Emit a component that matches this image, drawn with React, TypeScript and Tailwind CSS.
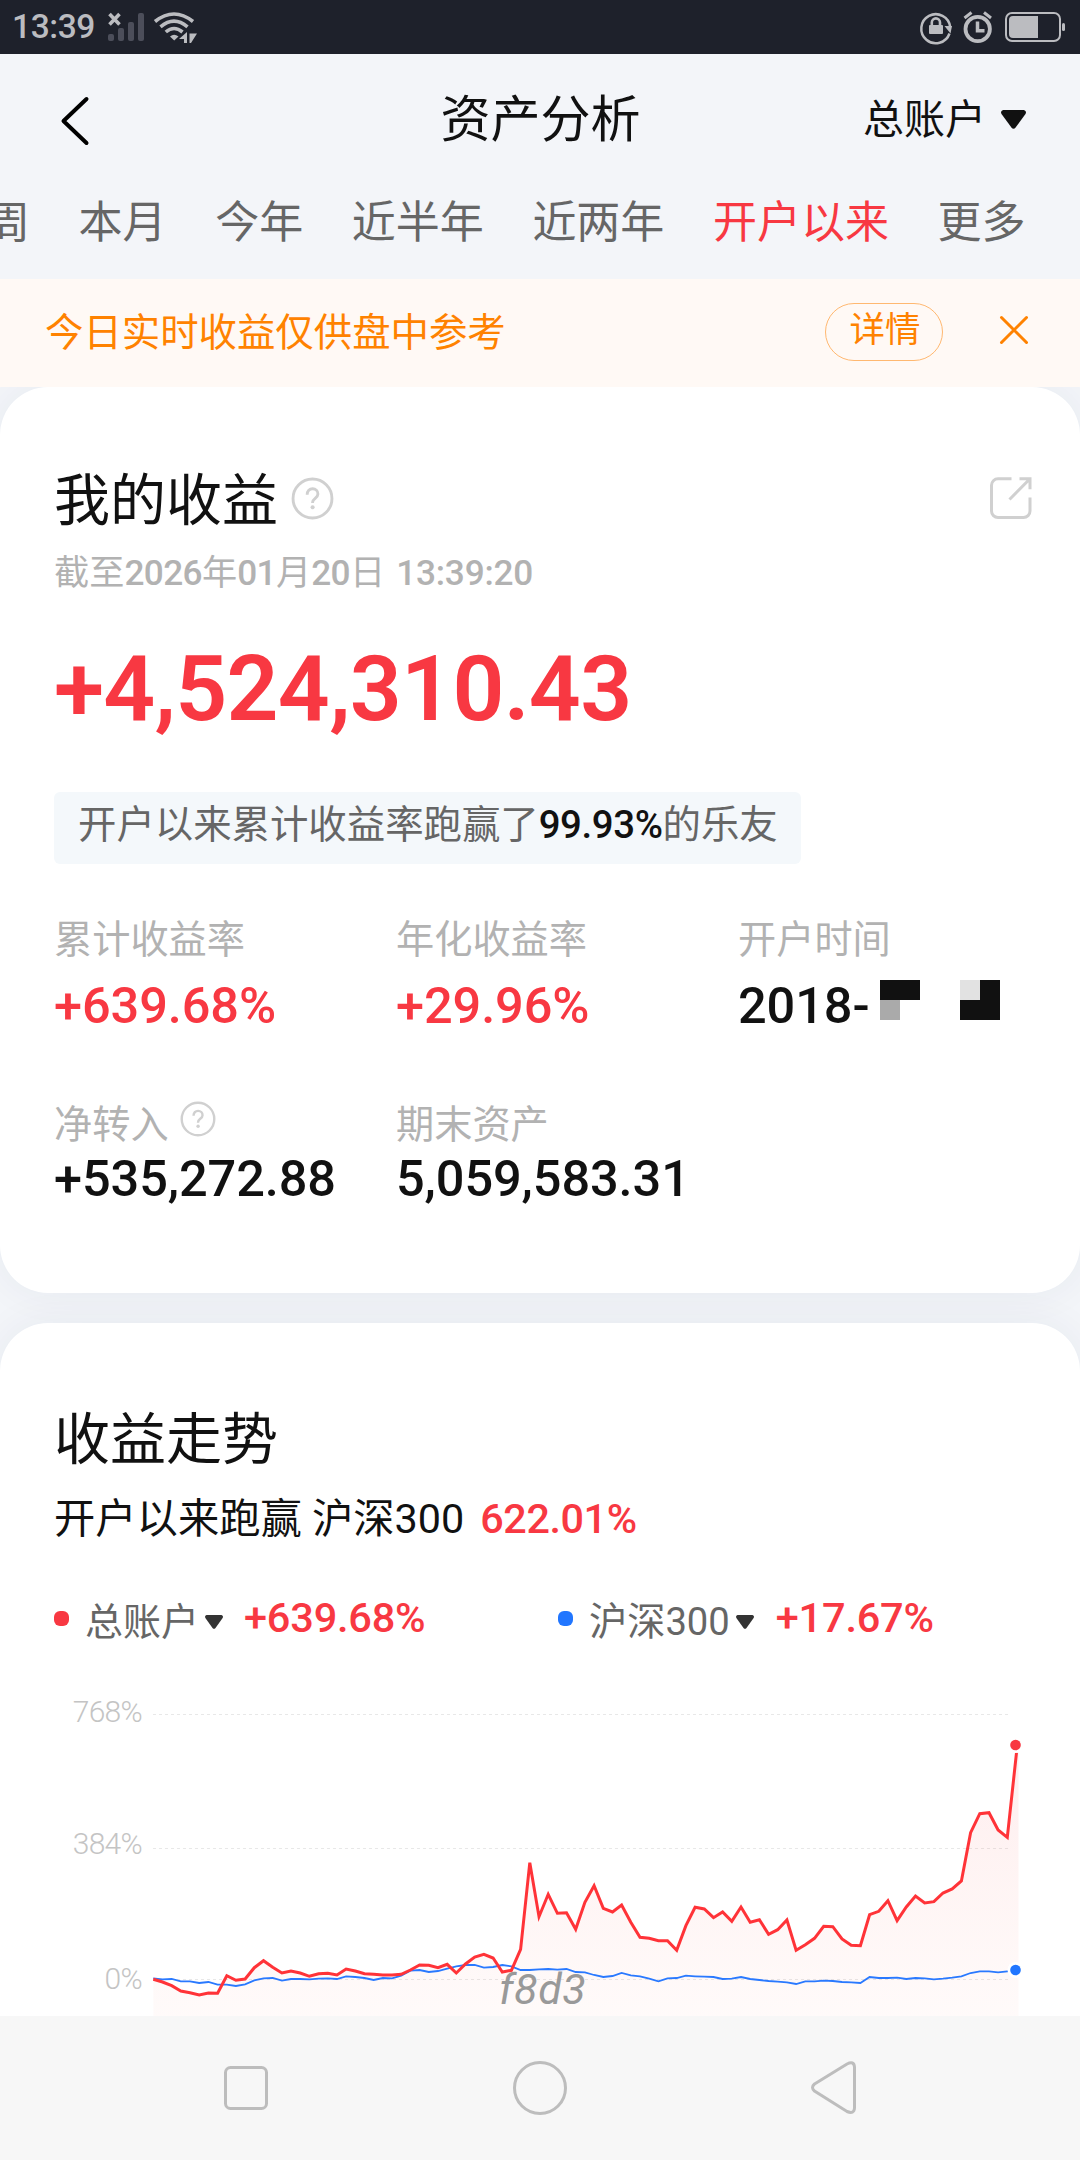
import type { ReactNode } from "react";

const TABS = ["本周", "本月", "今年", "近半年", "近两年", "开户以来", "更多"];
const ACTIVE_TAB = "开户以来";

// chart geometry: the series are stored as thirds of a pixel below CHART_TOP
const CHART_LEFT = 153.3;
const CHART_TOP = 1660;
const STEP = 9.183;

const ACCOUNT_SERIES = [
  958, 966, 977, 993, 998, 1005, 999, 1000, 947, 961, 957, 923, 902, 922, 939,
  933, 939, 949, 941, 940, 945, 927, 933, 941, 943, 945, 945, 943, 930, 915,
  916, 923, 913, 939, 912, 891, 883, 894, 936, 931, 868, 608, 770, 703, 760,
  758, 808, 727, 677, 745, 756, 735, 787, 832, 835, 842, 842, 871, 797, 742,
  747, 773, 756, 784, 741, 787, 779, 823, 809, 780, 871, 854, 835, 799, 800,
  837, 856, 857, 764, 754, 722, 782, 741, 708, 729, 725, 699, 687, 663, 518,
  461, 458, 510, 532, 278,
];

const INDEX_SERIES = [
  955, 958, 957, 964, 964, 969, 966, 974, 974, 978, 973, 961, 955, 954, 962,
  957, 957, 958, 956, 955, 957, 949, 951, 954, 960, 954, 955, 947, 932, 930,
  936, 933, 926, 919, 915, 915, 923, 921, 915, 919, 930, 930, 928, 927, 929,
  927, 936, 937, 945, 951, 948, 939, 946, 949, 956, 964, 955, 954, 947, 949,
  950, 951, 957, 956, 951, 957, 960, 963, 965, 967, 972, 964, 964, 962, 963,
  966, 967, 969, 951, 954, 954, 953, 957, 954, 955, 958, 956, 953, 949, 939,
  934, 934, 937, 934, 932,
];

const GRID = [
  { label: "768%", y: 1714.5, textY: 1722 },
  { label: "384%", y: 1848.5, textY: 1854 },
  { label: "0%", y: 1979.5, textY: 1989 },
];

function toPoints(series: number[]) {
  return series
    .map((v, i) => `${(CHART_LEFT + i * STEP).toFixed(1)},${(CHART_TOP + v / 3).toFixed(1)}`)
    .join(" ");
}

function StatusBar() {
  return (
    <div className="flex h-[54px] items-center justify-between bg-[#1e212b] pr-[14px] pl-[12px]">
      <div className="flex h-full items-center">
        <span className="w-[88px] text-[33.5px] leading-[58px] font-medium tracking-[-0.4px] text-[#bbbcc0]">
          13:39
        </span>
        <svg width="100" height="54" viewBox="100 0 100 54" fill="none">
          <path d="M109.5 14l10 10.500M119.500 14l-10 10.500" stroke="#bbbcc0" strokeWidth="3.600" />
          <g fill="#4c4e5a">
            <rect x="108" y="34" width="6" height="7" rx="2" />
            <rect x="118" y="28" width="6" height="13" rx="2" />
            <rect x="128" y="22" width="6" height="19" rx="2" />
            <rect x="138" y="13" width="6" height="28" rx="2" />
          </g>
          <g stroke="#bbbcc0" strokeWidth="3.600">
            <path d="M155 21.500Q174 6.500 193 21.500" />
            <path d="M160.500 26.800Q174 15.500 187.500 26.800" />
            <path d="M165.800 32Q174 25 182.500 32" />
          </g>
          <path d="M170 36.500Q174 33 178.500 36.500L174.200 40.500Z" fill="#bbbcc0" />
          <path d="M187 32v11h-3v-4h-5zM189.500 32v1.500h7.500l-6 9.500h-1.500z" fill="#bbbcc0" />
        </svg>
      </div>
      <svg width="148" height="54" viewBox="918 0 148 54" fill="none">
        <path
          d="M949.500 33.500A14.500 14.500 0 1 1 950.200 27"
          stroke="#bbbcc0"
          strokeWidth="2.500"
        />
        <path d="M944.500 26h7.500l-1.500 7.500z" fill="#bbbcc0" />
        <rect x="929" y="25" width="14" height="9" rx="1" fill="#bbbcc0" />
        <path d="M931.800 26v-3.500a4.100 4.100 0 0 1 8.200 0V26" stroke="#bbbcc0" strokeWidth="2.600" />
        <circle cx="977.700" cy="29" r="12.200" stroke="#bbbcc0" strokeWidth="3.800" />
        <path d="M977.500 21.500v9.200h7" stroke="#bbbcc0" strokeWidth="3.500" />
        <path d="M964.500 18l7-5.500M991 18l-7-5.500" stroke="#bbbcc0" strokeWidth="3" />
        <rect x="1006" y="13" width="54" height="28" rx="6" stroke="#bbbcc0" strokeWidth="2" />
        <path d="M1013 16h25v22h-25a4 4 0 0 1-4-4V20a4 4 0 0 1 4-4z" fill="#bbbcc0" />
        <rect x="1062" y="23" width="3" height="8" rx="1.500" fill="#bbbcc0" />
      </svg>
    </div>
  );
}

function Caret({ className }: { className: string }) {
  return (
    <svg viewBox="0 0 24 19" className={className} preserveAspectRatio="none" fill="currentColor">
      <path d="M2 0h20q3 1 1.500 4L14 17.500q-2 2.500-4 0L.5 4Q-1 1 2 0z" />
    </svg>
  );
}

function HelpIcon({ className }: { className: string }) {
  return (
    <svg viewBox="0 0 42 42" className={className} fill="none" stroke="#d0d0d0">
      <circle cx="21" cy="21" r="19" strokeWidth="2.800" />
      <path
        d="M15.800 17.300c0-3.600 2.300-5.800 5.300-5.800s5.200 2.100 5.200 5c0 4.200-5.200 4.300-5.200 8.200v.8"
        strokeWidth="2.800"
      />
      <circle cx="21.100" cy="29.500" r="2" fill="#d0d0d0" stroke="none" />
    </svg>
  );
}

function Header() {
  return (
    <header className="h-[225px] overflow-hidden bg-[#f3f5f9]">
      <div className="grid h-[131px] grid-cols-3 items-center pr-[54px] pl-[60px]">
        <svg width="30" height="50" viewBox="0 0 30 50" fill="none" className="mt-0.5">
          <path d="M26.500 3L3.500 25l23 22" stroke="#000" strokeWidth="4" strokeLinecap="round" strokeLinejoin="round" />
        </svg>
        <h1 className="mr-[5px] text-center text-[50px] leading-[60px] text-[#111]">资产分析</h1>
        <div className="flex items-center justify-end text-[#111]">
          <span className="text-[41px] leading-[54px]">总账户</span>
          <Caret className="ml-[15px] h-[19px] w-[25px]" />
        </div>
      </div>
      <nav className="-ml-[58px] flex gap-[48.6px] pt-[8px] text-[44px] leading-[60px] whitespace-nowrap text-[#666]">
        {TABS.map((tab) => (
          <span key={tab} className={tab === ACTIVE_TAB ? "text-[#f83842]" : ""}>
            {tab}
          </span>
        ))}
      </nav>
    </header>
  );
}

function Notice() {
  return (
    <div className="relative flex h-[108px] items-center bg-[#fff9f5] pl-[45px] text-[#ff8200]">
      <span className="flex-1 text-[38.4px] leading-[50px]">今日实时收益仅供盘中参考</span>
      <button className="mb-0.5 h-[58px] w-[118px] rounded-full border border-[#ffb870] pb-1 pl-0.5 text-[35.500px] leading-[50px]">
        详情
      </button>
      <svg width="30" height="30" viewBox="0 0 30 30" className="mr-[51px] mb-1.5 ml-14">
        <path d="M2.500 2.500l25 25M27.500 2.500l-25 25" stroke="currentColor" strokeWidth="3" strokeLinecap="round" />
      </svg>
    </div>
  );
}

type StatProps = {
  label: string;
  help?: boolean;
  tone?: string;
  gap?: string;
  children: ReactNode;
};

function Stat({ label, help, tone = "text-[#111]", gap = "mt-4", children }: StatProps) {
  return (
    <div>
      <div className="flex h-10 items-center text-[38.2px] leading-10 text-[#b2b2b2]">
        {label}
        {help && <HelpIcon className="mb-3 ml-[11px] h-9 w-9" />}
      </div>
      <div
        className={`flex h-[60px] items-center text-[50.5px] leading-[60px] font-medium tracking-[-0.1px] ${gap} ${tone}`}
      >
        {children}
      </div>
    </div>
  );
}

function EarningsCard() {
  return (
    <section className="h-[906px] rounded-[48px] bg-white pt-[84px] pl-[54px] shadow-[0_0_40px_rgba(40,50,80,0.06)]">
      <div className="flex h-[60px] items-center">
        <h2 className="text-[56px] leading-[60px] text-[#111]">我的收益</h2>
        <HelpIcon className="mb-1.5 ml-[13px] h-[43px] w-[43px]" />
        <svg width="44" height="44" viewBox="0 0 44 44" fill="none" className="mr-[47px] mb-1.5 ml-auto">
          <path
            d="M22.500 2.800H9a6.500 6.500 0 0 0-6.500 6.500V35A6.500 6.500 0 0 0 9 41.500h25.500A6.500 6.500 0 0 0 41 35V21.500M30.500 2.800H41v10.500M40.500 3.300L20.500 23.500"
            stroke="#d0d0d0"
            strokeWidth="3"
          />
        </svg>
      </div>
      <p className="mt-[18px] text-[35.2px] leading-[48px] text-[#b2b2b2]">
        截至<b className="font-medium tracking-[-0.6px]">2026</b>年
        <b className="font-medium tracking-[-0.6px]">01</b>月
        <b className="font-medium tracking-[-0.6px]">20</b>日
        <b className="ml-[11px] font-medium tracking-[-0.2px]">13:39:20</b>
      </p>
      <div className="mt-[42px] text-[91px] leading-[100px] font-semibold tracking-[-0.7px] text-[#f83842]">
        +4,524,310.43
      </div>
      <div className="mt-[53px] h-[72px] w-[747px] rounded-md bg-[#f4f8fb] pl-6 text-[38.4px] leading-[66px] whitespace-nowrap text-[#666]">
        开户以来累计收益率跑赢了
        <b className="font-medium tracking-[-0.4px] text-[#111]">99.93%</b>
        的乐友
      </div>
      <div className="mt-14 grid grid-cols-[342px_342px_342px] gap-y-[69px]">
        <Stat label="累计收益率" tone="text-[#f83842]">
          +639.68%
        </Stat>
        <Stat label="年化收益率" tone="text-[#f83842]">
          +29.96%
        </Stat>
        <Stat label="开户时间">
          2018-
          {/* masked month and day */}
          <span className="mb-3 ml-[11px] grid grid-cols-[20px_20px_40px_20px_20px] grid-rows-[20px_20px]">
            <i className="bg-[#111]" />
            <i className="bg-[#111]" />
            <i />
            <i className="bg-[#e2e2e2]" />
            <i className="bg-[#111]" />
            <i className="bg-[#aaa]" />
            <i />
            <i />
            <i className="bg-[#111]" />
            <i className="bg-[#111]" />
          </span>
        </Stat>
        <Stat label="净转入" help gap="mt-1">
          +535,272.88
        </Stat>
        <Stat label="期末资产" gap="mt-1">
          5,059,583.31
        </Stat>
      </div>
    </section>
  );
}

function TrendChart() {
  const account = toPoints(ACCOUNT_SERIES);
  return (
    <svg width="1080" height="373" viewBox="0 1643 1080 373" fill="none" className="block">
      <defs>
        <linearGradient id="area" gradientUnits="userSpaceOnUse" x1="0" y1="1740" x2="0" y2="2030">
          <stop offset="0" stopColor="#f83842" stopOpacity="0.09" />
          <stop offset="1" stopColor="#f85a42" stopOpacity="0.025" />
        </linearGradient>
      </defs>
      {GRID.map((g) => (
        <g key={g.label}>
          <text
            x="142"
            y={g.textY}
            textAnchor="end"
            fontSize="30"
            fontWeight="300"
            letterSpacing="-0.7"
            fill="#c4c4c4"
          >
            {g.label}
          </text>
          <path d={`M153 ${g.y}H1008`} stroke="#e8e8e8" strokeDasharray="3 3" />
        </g>
      ))}
      <polygon points={`${account} 1018.5,1752 1018.5,2030 153.500,2030`} fill="url(#area)" />
      <polyline points={toPoints(INDEX_SERIES)} stroke="#2979ff" strokeWidth="1.800" />
      <polyline points={account} stroke="#ff3338" strokeWidth="3" />
      <circle cx="1015.500" cy="1745" r="8" fill="#fff" />
      <circle cx="1015.500" cy="1745" r="5.300" fill="#f83842" />
      <circle cx="1015.500" cy="1970" r="8" fill="#fff" />
      <circle cx="1015.500" cy="1970" r="5.300" fill="#2176ff" />
      <text x="499" y="2004" fontSize="43" fontStyle="italic" letterSpacing="0.6" fill="#999">
        f8d3
      </text>
    </svg>
  );
}

function TrendCard() {
  return (
    <section className="mt-[30px] h-[693px] rounded-t-[48px] bg-white pt-[87px] shadow-[0_0_40px_rgba(40,50,80,0.06)]">
      <h2 className="pl-[54px] text-[56px] leading-[60px] text-[#111]">收益走势</h2>
      <p className="mt-6 pl-[54px] text-[41.3px] leading-[50px] text-[#111]">
        开户以来跑赢 沪深300
        <b className="ml-4 font-medium tracking-[-0.4px] text-[#f83842]">622.01%</b>
      </p>
      <div className="mt-[45px] mb-1 grid h-[50px] grid-cols-[504px_1fr] pl-[54px]">
        <div className="flex items-center">
          <i className="h-[15px] w-[15px] rounded-md bg-[#f83842]" />
          <span className="mt-2 ml-4 text-[38px] leading-[50px] text-[#666]">总账户</span>
          <Caret className="mt-2 ml-[6px] h-[14px] w-[18px] text-[#333]" />
          <b className="ml-[21px] text-[41.5px] leading-[50px] font-medium tracking-[-0.2px] text-[#f83842]">
            +639.68%
          </b>
        </div>
        <div className="flex items-center">
          <i className="h-[15px] w-[15px] rounded-md bg-[#2176ff]" />
          <span className="mt-2 ml-4 text-[38.200px] leading-[50px] text-[#666]">沪深300</span>
          <Caret className="mt-2 ml-[6px] h-[14px] w-[18px] text-[#333]" />
          <b className="ml-[22px] text-[41.5px] leading-[50px] font-medium tracking-[-0.2px] text-[#f83842]">
            +17.67%
          </b>
        </div>
      </div>
      <TrendChart />
    </section>
  );
}

function SystemNav() {
  return (
    <div className="flex h-36 items-center justify-between bg-[#f7f7f7] px-[223px]">
      <svg width="46" height="56" viewBox="0 0 46 56" fill="none" stroke="#bdbdbd" strokeWidth="3">
        <rect x="2.500" y="7.500" width="41" height="41" rx="5" />
      </svg>
      <svg width="56" height="56" viewBox="0 0 56 56" fill="none" stroke="#bdbdbd" strokeWidth="3">
        <circle cx="28" cy="28" r="25.500" />
      </svg>
      <svg width="46" height="56" viewBox="0 0 46 56" fill="none" stroke="#bdbdbd" strokeWidth="3">
        <path d="M3.500 24L36 4Q43 0.500 43.500 7V48Q43 54.500 36 51.500L3.500 31Q-0.500 27.500 3.500 24Z" />
      </svg>
    </div>
  );
}

export default function App() {
  return (
    <div className="h-[2160px] w-[1080px] overflow-hidden bg-[#f3f5f9] font-[Roboto,'Noto_Sans_CJK_SC',sans-serif] font-normal">
      <StatusBar />
      <Header />
      <Notice />
      <EarningsCard />
      <TrendCard />
      <SystemNav />
    </div>
  );
}
